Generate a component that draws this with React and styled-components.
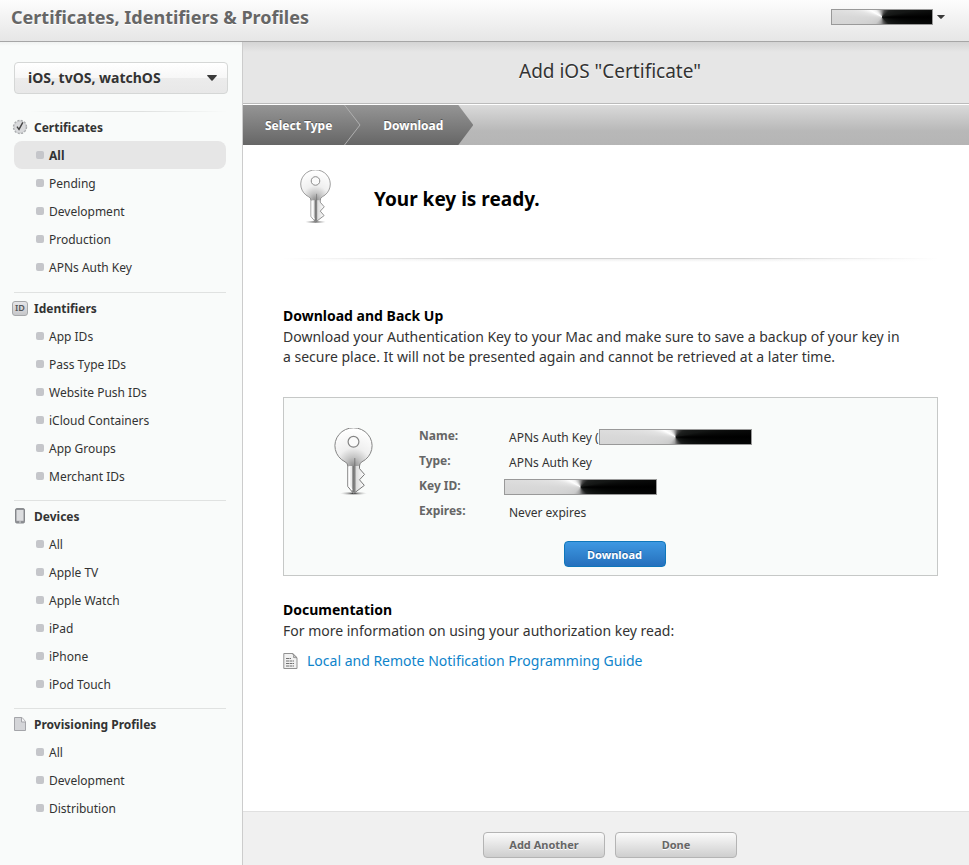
import React, { useId } from "react";
import styled, { createGlobalStyle, css } from "styled-components";

const GlobalStyle = createGlobalStyle`
  *, *::before, *::after { box-sizing: border-box; }
  body {
    margin: 0;
    background: #fff;
    color: #333;
    font-family: "Noto Sans", "Open Sans", sans-serif;
    font-size: 12px;
  }
  h1, h2, h3, p, ul, ol, dl, dd { margin: 0; padding: 0; }
  ul, ol { list-style: none; }
  button, select { font-family: inherit; }
`;

const Page = styled.div`
  display: flex;
  flex-direction: column;
  min-height: 100vh;
`;

const TopBar = styled.header`
  display: flex;
  align-items: flex-start;
  justify-content: space-between;
  height: 42px;
  padding: 4px 24px 0 11px;
  border-bottom: 1px solid #a6a6a6;
  background: linear-gradient(#fdfdfd, #e6e6e6);
`;

const SiteTitle = styled.h1`
  font-size: 18px;
  line-height: 26px;
  font-weight: 700;
  color: #666;
  text-shadow: 0 1px 0 #fff;
`;

const AccountButton = styled.button`
  display: flex;
  align-items: center;
  gap: 4px;
  margin-top: 5px;
  padding: 0;
  border: 0;
  background: none;
`;

const Redacted = styled.span`
  display: inline-block;
  flex: none;
  width: ${(p) => (p.$small ? 102 : 153)}px;
  height: 16px;
  border: 1px solid #999;
  background: conic-gradient(
    from 0deg at 50% 50%,
    #8a8a8a 0deg, #4a4a4a 22deg, #202221 50deg, #141615 78deg, #000 90deg,
    #0c0e0d 105deg, #1c1e1d 135deg, #555 162deg, #a0a0a0 190deg, #cacaca 225deg,
    #d8d8d8 270deg, #e4e4e4 284deg, #fff 300deg, #f0f0f0 318deg, #c0c0c0 340deg, #8a8a8a 360deg
  );
`;

const Columns = styled.div`
  display: flex;
  flex: 1;
`;

const Sidebar = styled.aside`
  flex: none;
  width: 243px;
  padding: 20px 16px 0 14px;
  border-right: 1px solid #ccc;
  background: linear-gradient(#f0f2f1, #f9fbfa 4px);
`;

const PlatformPicker = styled.div`
  display: grid;
  align-items: center;
  width: 214px;
  margin-bottom: 17px;

  > * { grid-area: 1 / 1; }
  > svg { justify-self: end; margin-right: 11px; pointer-events: none; }
`;

const PlatformSelect = styled.select`
  appearance: none;
  width: 100%;
  height: 32px;
  padding: 0 13px 2px;
  border: 1px solid #d5d7d6;
  border-radius: 4px;
  background: linear-gradient(#fff, #f7f7f7 50%, #ececec 50%, #e8e8e8);
  color: #333;
  font-size: 14px;
  font-weight: 700;
`;

const Group = styled.section`
  padding: 1px 0 10px;
  border-top: 1px solid #e0e2e1;
  ${(p) =>
    p.$faded &&
    css`
      padding-bottom: 11px;
      border-image: linear-gradient(90deg, transparent 8%, #dfe1e0 40%, #dfe1e0 60%, transparent) 1;
    `}
`;

const GroupTitle = styled.h2`
  display: flex;
  align-items: center;
  gap: 6px;
  height: 28px;
  margin-left: -2px;
  font-size: 12px;
  font-weight: 700;
  color: #333;

  > svg { flex: none; }
`;

const NavLink = styled.a`
  display: flex;
  align-items: center;
  gap: 5px;
  height: 28px;
  padding-left: 22px;
  border-radius: 8px;
  background: ${(p) => (p.$active ? "#e6e6e6" : "transparent")};
  color: #333;
  font-size: 12px;
  font-weight: ${(p) => (p.$active ? 700 : 400)};
  text-decoration: none;

  &::before {
    content: "";
    width: 8px;
    height: 8px;
    border-radius: 2px;
    background: #c5c6ca;
  }
`;

const Main = styled.main`
  display: flex;
  flex: 1;
  flex-direction: column;
  min-width: 0;
`;

const TitleBar = styled.div`
  height: 62px;
  padding: 16px 0 0 8px;
  border-bottom: 1px solid #bbb;
  background: linear-gradient(#d4d4d4, #e6e6e6 10px);
  text-align: center;
`;

const PageTitle = styled.h2`
  font-size: 19px;
  line-height: 26px;
  font-weight: 400;
  color: #333;
  text-shadow: 0 1px 0 #fff;
`;

const StepBar = styled.nav`
  margin-top: 1px;
  background: linear-gradient(#dadada, #b8b8b8 65%, #b5b5b5);
`;

const Steps = styled.ol`
  display: inline-flex;
  align-items: center;
  height: 40px;
  padding: 0 30px 0 22px;
  background: linear-gradient(#959595, #666);
  clip-path: polygon(0 0, calc(100% - 15px) 0, 100% 50%, calc(100% - 15px) 100%, 0 100%);
  vertical-align: top;
`;

const Step = styled.li`
  display: flex;
  align-items: center;
  color: #fff;
  font-size: 12px;
  font-weight: 700;
  text-shadow: 0 -1px 0 #555;

  > svg { margin: 0 22px 0 12px; }
`;

const Content = styled.div`
  flex: 1;
  padding: 25px 31px 40px 40px;
`;

const Hero = styled.div`
  display: flex;
  align-items: flex-start;
  gap: 43px;
  height: 88px;
  padding-left: 17px;
`;

const HeroText = styled.h2`
  padding-top: 16px;
  font-size: 19px;
  line-height: 26px;
  font-weight: 700;
  color: #000;
`;

const Rule = styled.div`
  height: 4px;
  margin-bottom: 42px;
  background:
    linear-gradient(90deg, #fff, transparent 30%, transparent 70%, #fff),
    linear-gradient(#d2d2d2 1px, #eee 1px, #fff);
`;

const SectionTitle = styled.h3`
  font-size: 14px;
  line-height: 23px;
  font-weight: 700;
  color: #000;
`;

const Text = styled.p`
  max-width: 626px;
  font-size: 14px;
  line-height: 20px;
`;

const Card = styled.section`
  display: grid;
  grid-template-columns: 49px 1fr;
  column-gap: 36px;
  margin: 30px 0 22px;
  padding: 28px 50px 8px;
  border: 1px solid #c6c8c7;
  background: #f9fbfa;

  > svg { margin-top: 2px; }
`;

const Details = styled.dl`
  display: grid;
  grid-template-columns: 90px 1fr;
  align-content: start;
  grid-auto-rows: 25px;
`;

const Term = styled.dt`
  font-size: 12px;
  line-height: 20px;
  font-weight: 700;
  color: #666;
`;

const Value = styled.dd`
  display: flex;
  align-items: center;
  height: 22px;
  margin-left: ${(p) => (p.$outdent ? -5 : 0)}px;
  font-size: 12px;
  white-space: nowrap;
`;

const CardAction = styled.div`
  grid-column: 1 / -1;
  display: flex;
  justify-content: center;
  padding: 15px 0 0 8px;
`;

const BlueButton = styled.button`
  width: 102px;
  height: 26px;
  padding: 0;
  border: 1px solid #0f77bb;
  border-radius: 4px;
  background: linear-gradient(#3d98e2, #2670bd);
  color: #fff;
  font-size: 11px;
  font-weight: 700;
  text-shadow: 0 -1px 0 #1c5c9c;
`;

const DocLink = styled.a`
  display: inline-flex;
  align-items: center;
  gap: 9px;
  margin-top: 10px;
  color: #0e84cb;
  font-size: 14px;
  line-height: 20px;
  text-decoration: none;
`;

const Footer = styled.footer`
  display: flex;
  justify-content: center;
  gap: 10px;
  padding: 20px 0 7px 8px;
  border-top: 1px solid #e0e0e0;
  background: #f0f0f0;
`;

const GreyButton = styled.button`
  width: 122px;
  height: 26px;
  padding: 0 0 2px;
  border: 1px solid #b4b4b4;
  border-radius: 4px;
  background: linear-gradient(#fbfbfb, #cecece);
  color: #666;
  font-size: 11px;
  font-weight: 700;
  text-shadow: 0 1px 0 #fff;
`;

function Caret({ size }) {
  return (
    <svg width={size} height={size === 10 ? 6 : 4} viewBox="0 0 10 6" preserveAspectRatio="none" aria-hidden="true">
      <path d="M0.4 0h9.2Q10 .3 9.6.9L5.6 5.5Q5 6.1 4.4 5.5L.4.9Q0 .3.4 0Z" fill="#3a3a3a" />
    </svg>
  );
}

function KeyIcon({ width, height }) {
  const id = useId();
  return (
    <svg width={width} height={height} viewBox="0 0 39 68" preserveAspectRatio="none" aria-hidden="true">
      <defs>
        <radialGradient id={id + "head"} cx=".5" cy="1" r=".95">
          <stop offset="0" stopColor="#8c8c8c" />
          <stop offset=".24" stopColor="#c4c4c4" />
          <stop offset=".5" stopColor="#efefef" />
          <stop offset="1" stopColor="#fff" />
        </radialGradient>
        <linearGradient id={id + "shaft"}>
          <stop offset="0" stopColor="#fff" />
          <stop offset=".28" stopColor="#e4e4e4" />
          <stop offset=".36" stopColor="#888" />
          <stop offset=".52" stopColor="#ddd" />
          <stop offset="1" stopColor="#fff" />
        </linearGradient>
        <radialGradient id={id + "shadow"}>
          <stop offset="0" stopColor="#222" />
          <stop offset=".4" stopColor="#888" stopOpacity=".7" />
          <stop offset="1" stopColor="#bbb" stopOpacity="0" />
        </radialGradient>
      </defs>
      <ellipse cx="19.5" cy="65.4" rx="13.5" ry="2" fill={`url(#${id}shadow)`} />
      <path
        d="M13.8 34V58.5L19.6 65.6 30.3 57.4 25.5 51.8 30.5 46.4 25.5 40.6V34Z"
        fill={`url(#${id}shaft)`} stroke="#777" strokeWidth="1" strokeLinejoin="round"
      />
      <path
        d="M13.8 38Q13.8 35 11 33.8A18.6 18 0 1 1 28 33.8Q25.5 35 25.5 38Z"
        fill={`url(#${id}head)`}
      />
      <path
        d="M13.8 38Q13.8 35 11 33.8A18.6 18 0 1 1 28 33.8Q25.5 35 25.5 38"
        fill="none" stroke="#858585" strokeWidth="1"
      />
      <path d="M19 38V64" stroke="#555" strokeWidth="1" />
      <path d="M20.8 30V64" stroke="#666" strokeWidth="1" opacity=".7" />
      <path d="M15.2 39V58L18 61.8" fill="none" stroke="#fff" strokeWidth="1.4" />
      <circle cx="19.5" cy="13.8" r="5.4" fill="#fafafa" stroke="#858585" strokeWidth="1.2" />
    </svg>
  );
}

function SealIcon() {
  return (
    <svg width="16" height="16" viewBox="0 0 16 16" aria-hidden="true">
      <circle cx="8" cy="8" r="6.4" fill="#d6d8da" stroke="#a9abad" strokeWidth="1.6" strokeDasharray="2 1.35" />
      <circle cx="8" cy="8" r="5.9" fill="#d9dadc" stroke="#bcbec0" strokeWidth=".5" />
      <path d="M5 7.6 7 10.4 10.8 3.4" fill="none" stroke="#444" strokeWidth="1.4" />
    </svg>
  );
}

const IdBadge = styled.span`
  display: flex;
  align-items: center;
  justify-content: center;
  width: 16px;
  height: 15px;
  border: 1px solid #a6a8aa;
  border-radius: 3px;
  background: linear-gradient(#e6e6e8, #c6c7ca);
  color: #55575a;
  font-size: 9px;
  line-height: 12px;
  font-weight: 600;
`;

function DeviceIcon() {
  return (
    <svg width="16" height="16" viewBox="0 0 16 16" aria-hidden="true">
      <rect x="3.5" y=".6" width="9" height="14.4" rx="1.3" fill="#8f9195" stroke="#85878b" />
      <rect x="4.5" y="2" width="7" height="10.8" fill="#dcdddf" />
      <path d="M7 14h2" stroke="#d5d6d8" />
    </svg>
  );
}

function ProfileIcon() {
  return (
    <svg width="16" height="16" viewBox="0 0 16 16" aria-hidden="true">
      <path d="M2.5 1.5h7.5l3.5 4v9h-11Z" fill="#d4d5d8" stroke="#a4a5a9" />
      <path d="M9.5 1.5v4.5h4" fill="#f4f4f5" stroke="#a4a5a9" />
    </svg>
  );
}

function DocIcon() {
  return (
    <svg width="15" height="16" viewBox="0 0 15 16" aria-hidden="true">
      <path d="M.8.5h9L14 4.7v10.8H.8Z" fill="#f1f1f1" stroke="#929292" />
      <path d="M9.5.5Q11 2.5 10.5 4.5L14 4.8Z" fill="#ccc" stroke="#888" strokeWidth=".8" />
      <path d="M3 5.5h5M3 8h8M3 10.5h8M3 13h8" stroke="#707070" strokeDasharray="3 .5" />
    </svg>
  );
}

const groups = [
  { title: "Certificates", icon: <SealIcon />, items: ["All", "Pending", "Development", "Production", "APNs Auth Key"], active: "All" },
  {
    title: "Identifiers",
    icon: <IdBadge aria-hidden="true">ID</IdBadge>,
    items: ["App IDs", "Pass Type IDs", "Website Push IDs", "iCloud Containers", "App Groups", "Merchant IDs"],
  },
  { title: "Devices", icon: <DeviceIcon />, items: ["All", "Apple TV", "Apple Watch", "iPad", "iPhone", "iPod Touch"] },
  { title: "Provisioning Profiles", icon: <ProfileIcon />, items: ["All", "Development", "Distribution"] },
];

export default function App() {
  return (
    <Page>
      <GlobalStyle />
      <TopBar>
        <SiteTitle>Certificates, Identifiers &amp; Profiles</SiteTitle>
        <AccountButton type="button" aria-label="Account menu">
          <Redacted $small />
          <Caret size={8} />
        </AccountButton>
      </TopBar>
      <Columns>
        <Sidebar>
          <PlatformPicker>
            <PlatformSelect aria-label="Platform" defaultValue="ios">
              <option value="ios">iOS, tvOS, watchOS</option>
            </PlatformSelect>
            <Caret size={10} />
          </PlatformPicker>
          <nav aria-label="Sections">
            {groups.map((group, i) => (
              <Group key={group.title} $faded={i === 0}>
                <GroupTitle>{group.icon}{group.title}</GroupTitle>
                <ul>
                  {group.items.map((item) => (
                    <li key={item}>
                      <NavLink href="#" $active={group.active === item}>{item}</NavLink>
                    </li>
                  ))}
                </ul>
              </Group>
            ))}
          </nav>
        </Sidebar>
        <Main>
          <TitleBar>
            <PageTitle>Add iOS "Certificate"</PageTitle>
          </TitleBar>
          <StepBar aria-label="Progress">
            <Steps>
              <Step>
                Select Type
                <svg width="17" height="40" viewBox="0 0 17 40" aria-hidden="true">
                  <path d="M.5 0 16 20 .5 40" fill="none" stroke="#b0b0b0" />
                </svg>
              </Step>
              <Step aria-current="step">Download</Step>
            </Steps>
          </StepBar>
          <Content>
            <Hero>
              <KeyIcon width={31} height={54} />
              <HeroText>Your key is ready.</HeroText>
            </Hero>
            <Rule />
            <SectionTitle>Download and Back Up</SectionTitle>
            <Text>
              Download your Authentication Key to your Mac and make sure to save a backup of your key in
              a secure place. It will not be presented again and cannot be retrieved at a later time.
            </Text>
            <Card>
              <KeyIcon width={39} height={68} />
              <Details>
                <Term>Name:</Term>
                <Value>APNs Auth Key (<Redacted /></Value>
                <Term>Type:</Term>
                <Value>APNs Auth Key</Value>
                <Term>Key ID:</Term>
                <Value $outdent><Redacted /></Value>
                <Term>Expires:</Term>
                <Value>Never expires</Value>
              </Details>
              <CardAction>
                <BlueButton type="button">Download</BlueButton>
              </CardAction>
            </Card>
            <SectionTitle>Documentation</SectionTitle>
            <Text>For more information on using your authorization key read:</Text>
            <DocLink href="#"><DocIcon />Local and Remote Notification Programming Guide</DocLink>
          </Content>
          <Footer>
            <GreyButton type="button">Add Another</GreyButton>
            <GreyButton type="button">Done</GreyButton>
          </Footer>
        </Main>
      </Columns>
    </Page>
  );
}
